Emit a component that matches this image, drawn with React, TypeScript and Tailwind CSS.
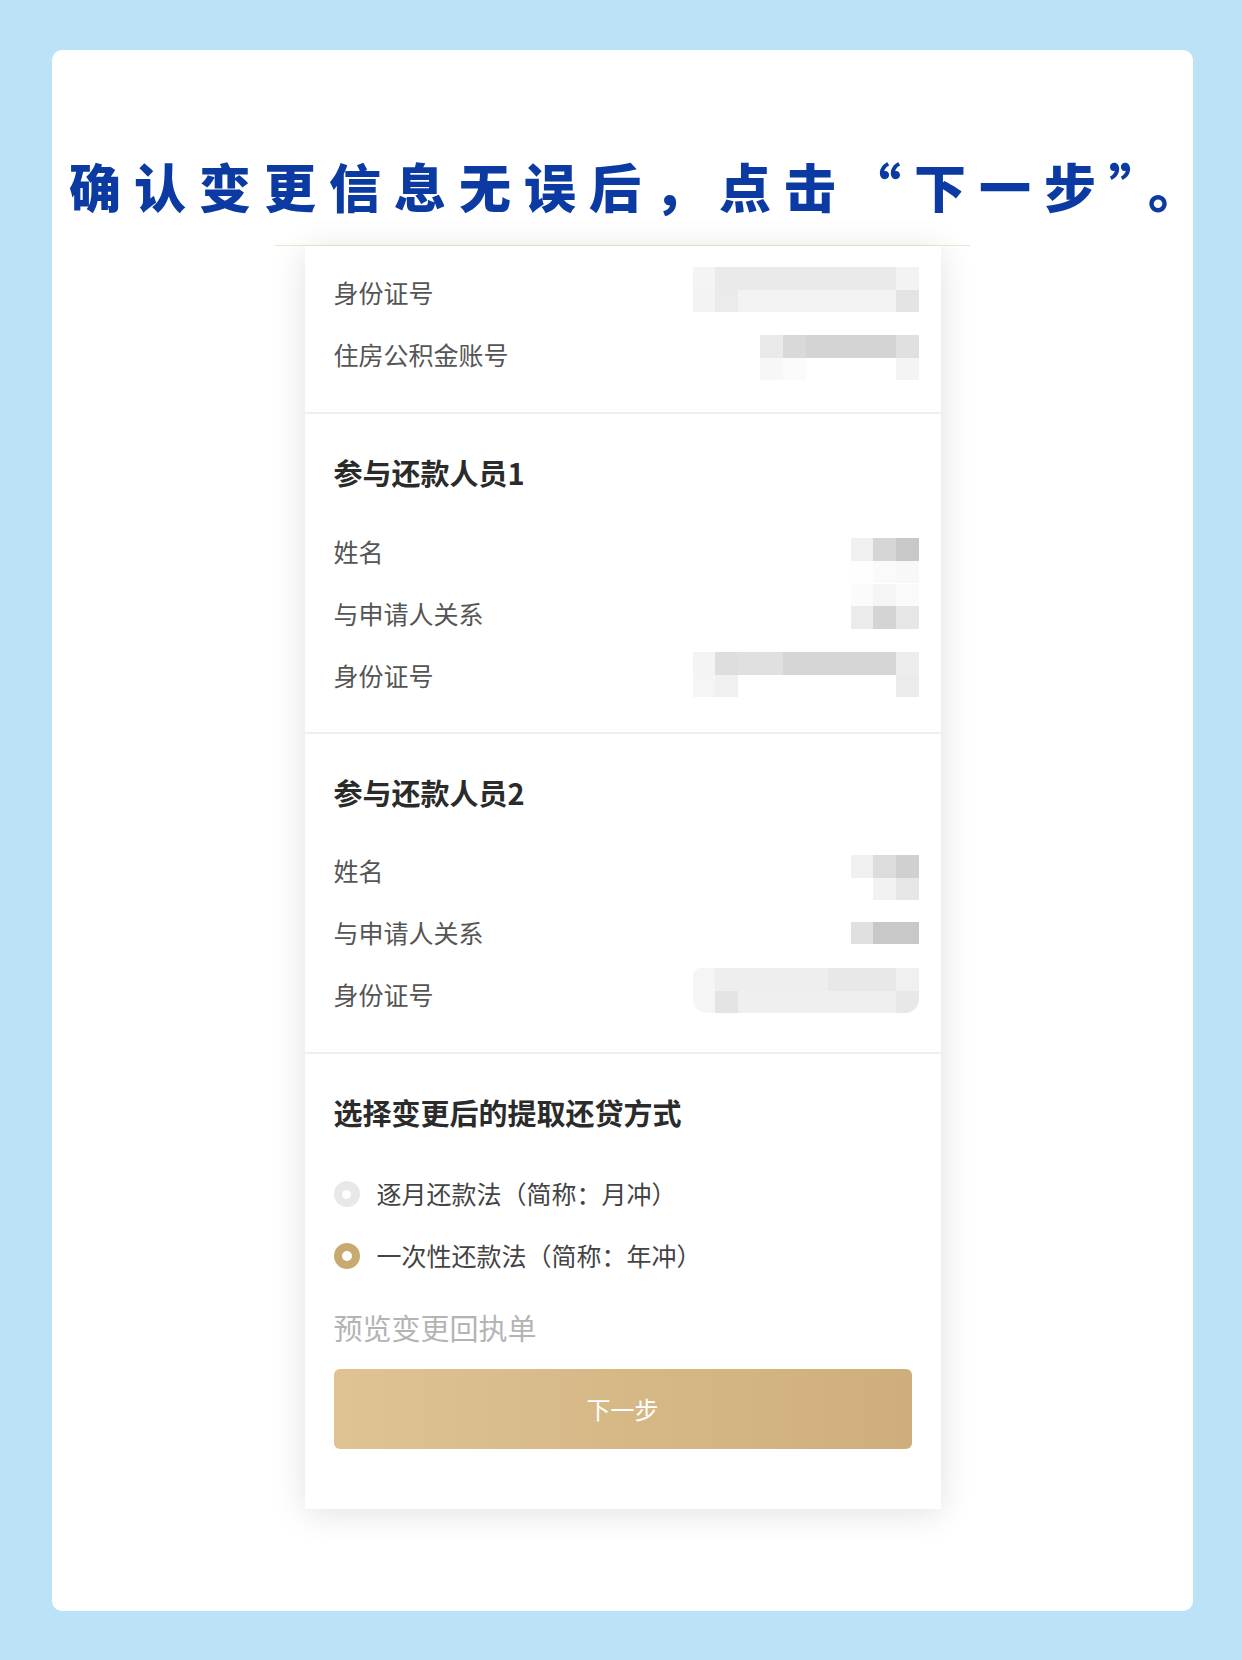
import React from "react";

type Cells = string[][];

// pixelated placeholders for the redacted values
const idTop: Cells = [
  ["bg-[#f4f4f4]", "bg-[#eaeaea]", "bg-[#eaeaea]", "bg-[#eaeaea]", "bg-[#eaeaea]", "bg-[#eaeaea]", "bg-[#eaeaea]", "bg-[#eaeaea]", "bg-[#eaeaea]", "bg-[#f3f3f3]"],
  ["bg-[#f3f3f3]", "bg-[#ebebeb]", "bg-[#f3f3f3]", "bg-[#f3f3f3]", "bg-[#f3f3f3]", "bg-[#f3f3f3]", "bg-[#f3f3f3]", "bg-[#f3f3f3]", "bg-[#f3f3f3]", "bg-[#e4e4e4]"],
];
const fundNo: Cells = [
  ["bg-[#eaeaea]", "bg-[#d9d9d9]", "bg-[#d4d4d4]", "bg-[#d4d4d4]", "bg-[#d4d4d4]", "bg-[#d4d4d4]", "bg-[#e0e0e0]"],
  ["bg-[#f7f7f7]", "bg-[#fbfbfb]", "bg-white", "bg-white", "bg-white", "bg-white", "bg-[#f4f4f4]"],
];
const name1: Cells = [
  ["bg-[#f0f0f0]", "bg-[#d6d6d6]", "bg-[#c8c8c8]"],
  ["bg-[#fefefe]", "bg-[#fafafa]", "bg-[#f8f8f8]"],
];
const rel1: Cells = [
  ["bg-[#fbfbfb]", "bg-[#f5f5f5]", "bg-[#fafafa]"],
  ["bg-[#ebebeb]", "bg-[#d4d4d4]", "bg-[#e6e6e6]"],
];
const id1: Cells = [
  ["bg-[#f4f4f4]", "bg-[#dedede]", "bg-[#e0e0e0]", "bg-[#e0e0e0]", "bg-[#d6d6d6]", "bg-[#d6d6d6]", "bg-[#d6d6d6]", "bg-[#d6d6d6]", "bg-[#d6d6d6]", "bg-[#ededed]"],
  ["bg-[#f5f5f5]", "bg-[#f0f0f0]", "bg-white", "bg-white", "bg-white", "bg-white", "bg-white", "bg-white", "bg-white", "bg-[#ebebeb]"],
];
const name2: Cells = [
  ["bg-[#f0f0f0]", "bg-[#dcdcdc]", "bg-[#d0d0d0]"],
  ["bg-white", "bg-[#f2f2f2]", "bg-[#e6e6e6]"],
];
const rel2: Cells = [["bg-[#e0e0e0]", "bg-[#c8c8c8]", "bg-[#c8c8c8]"]];
const id2: Cells = [
  ["bg-[#f5f5f5]", "bg-[#eeeeee]", "bg-[#eeeeee]", "bg-[#eeeeee]", "bg-[#eeeeee]", "bg-[#eeeeee]", "bg-[#e8e8e8]", "bg-[#e8e8e8]", "bg-[#e8e8e8]", "bg-[#f0f0f0]"],
  ["bg-[#f5f5f5]", "bg-[#e4e4e4]", "bg-[#efefef]", "bg-[#efefef]", "bg-[#efefef]", "bg-[#efefef]", "bg-[#efefef]", "bg-[#efefef]", "bg-[#efefef]", "bg-[#e8e8e8]"],
];

function Mosaic({ cells, className = "" }: { cells: Cells; className?: string }) {
  return (
    <div className={`flex flex-col overflow-hidden ${className}`}>
      {cells.map((row, i) => (
        <div key={i} className="flex">
          {row.map((c, j) => (
            <div key={j} className={`w-[22.6px] h-[22.5px] ${c}`} />
          ))}
        </div>
      ))}
    </div>
  );
}

function Row({ label, children }: { label: string; children?: React.ReactNode }) {
  return (
    <div className="h-[62px] flex items-center justify-between">
      <span className="text-[25px] text-[#555555]">{label}</span>
      {children}
    </div>
  );
}

function SectionTitle({ children }: { children: React.ReactNode }) {
  return <h2 className="h-[40px] leading-[40px] text-[29px] font-bold text-[#2b2b2b]">{children}</h2>;
}

function Radio({ checked, label }: { checked?: boolean; label: string }) {
  return (
    <div className="h-[62px] flex items-center gap-[17px]">
      <span
        className={`w-[26px] h-[26px] rounded-full flex items-center justify-center ${
          checked ? "bg-[#c8aa70]" : "bg-[#e8e8e8]"
        }`}
      >
        <span className={`rounded-full bg-white ${checked ? "w-[10px] h-[10px]" : "w-[9px] h-[9px]"}`} />
      </span>
      <span className="text-[25px] text-[#444444]">{label}</span>
    </div>
  );
}

export default function App() {
  return (
    <div
      className="w-[1242px] h-[1660px] bg-[#bbe2f7] pt-[50px] pl-[52px]"
      style={{ fontFamily: '"Noto Sans CJK SC", "Noto Sans", sans-serif' }}
    >
      <div className="w-[1141px] h-[1561px] bg-white rounded-[10px] flex flex-col items-center">
        <h1 className="self-stretch mt-[105px] h-[62px] leading-[62px] pl-[17px] text-[52px] font-black tracking-[13px] text-[#0b3aa2] whitespace-nowrap">
          确认变更信息无误后，点击“下一步”。
        </h1>

        <div className="mt-[28px] w-[695px] border-t border-[#f1e4cc] flex justify-center">
          <div className="w-[636px] bg-white shadow-[0_4px_32px_rgba(0,0,0,0.12)] flex flex-col">
            {/* top, cut-off section */}
            <div className="pt-[16px] pb-[26px] pl-[29px] pr-[22px]">
              <Row label="身份证号">
                <Mosaic cells={idTop} className="mb-[7px]" />
              </Row>
              <Row label="住房公积金账号">
                <Mosaic cells={fundNo} className="mt-[5px]" />
              </Row>
            </div>

            <div className="h-[2px] bg-[#efefef]" />

            <div className="pt-[38px] pb-[25px] pl-[29px] pr-[22px]">
              <SectionTitle>参与还款人员1</SectionTitle>
              <div className="mt-[29px]">
                <Row label="姓名">
                  <Mosaic cells={name1} className="mt-[17px]" />
                </Row>
                <Row label="与申请人关系">
                  <Mosaic cells={rel1} className="mb-[16px]" />
                </Row>
                <Row label="身份证号">
                  <Mosaic cells={id1} className="mb-[3px]" />
                </Row>
              </div>
            </div>

            <div className="h-[2px] bg-[#efefef]" />

            <div className="pt-[38px] pb-[26px] pl-[29px] pr-[22px]">
              <SectionTitle>参与还款人员2</SectionTitle>
              <div className="mt-[28px]">
                <Row label="姓名">
                  <Mosaic cells={name2} className="mt-[13px]" />
                </Row>
                <Row label="与申请人关系">
                  <Mosaic cells={rel2} />
                </Row>
                <Row label="身份证号">
                  <Mosaic cells={id2} className="mb-[9px] rounded-b-[14px] rounded-tl-[8px]" />
                </Row>
              </div>
            </div>

            <div className="h-[2px] bg-[#efefef]" />

            <div className="pt-[38px] pb-[60px] pl-[29px] pr-[29px]">
              <SectionTitle>选择变更后的提取还贷方式</SectionTitle>
              <div className="mt-[31px]">
                <Radio label="逐月还款法（简称：月冲）" />
                <Radio checked label="一次性还款法（简称：年冲）" />
              </div>
              <p className="mt-[20px] h-[40px] leading-[40px] text-[29px] text-[#b4b4b4]">预览变更回执单</p>
              <button className="mt-[22px] w-full h-[80px] rounded-[6px] bg-gradient-to-r from-[#dfc393] to-[#ceae7c] text-white text-[24px] flex items-center justify-center">
                下一步
              </button>
            </div>
          </div>
        </div>
      </div>
    </div>
  );
}
